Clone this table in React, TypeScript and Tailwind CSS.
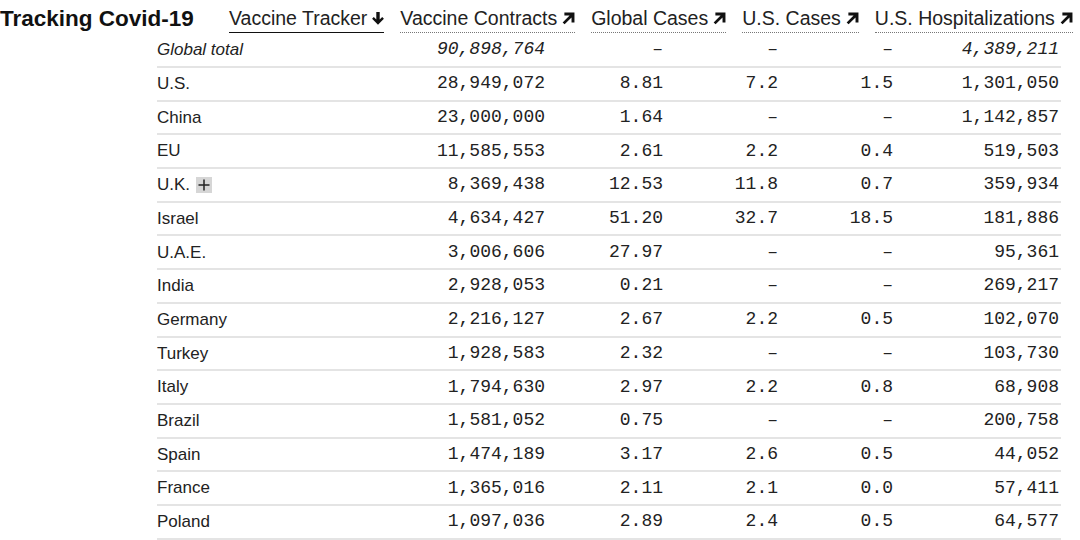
const sans = "font-['Liberation_Sans',Arial,sans-serif]"
const mono = "font-['Liberation_Mono','Courier_New',monospace]"

type Row = {
  name: string
  contracts: string
  global: string
  usCases: string
  usHosp: string
  hosp: string
  italic?: boolean
  plus?: boolean
}

const rows: Row[] = [
  { name: 'Global total', contracts: '90,898,764', global: '–', usCases: '–', usHosp: '–', hosp: '4,389,211', italic: true },
  { name: 'U.S.', contracts: '28,949,072', global: '8.81', usCases: '7.2', usHosp: '1.5', hosp: '1,301,050' },
  { name: 'China', contracts: '23,000,000', global: '1.64', usCases: '–', usHosp: '–', hosp: '1,142,857' },
  { name: 'EU', contracts: '11,585,553', global: '2.61', usCases: '2.2', usHosp: '0.4', hosp: '519,503' },
  { name: 'U.K.', contracts: '8,369,438', global: '12.53', usCases: '11.8', usHosp: '0.7', hosp: '359,934', plus: true },
  { name: 'Israel', contracts: '4,634,427', global: '51.20', usCases: '32.7', usHosp: '18.5', hosp: '181,886' },
  { name: 'U.A.E.', contracts: '3,006,606', global: '27.97', usCases: '–', usHosp: '–', hosp: '95,361' },
  { name: 'India', contracts: '2,928,053', global: '0.21', usCases: '–', usHosp: '–', hosp: '269,217' },
  { name: 'Germany', contracts: '2,216,127', global: '2.67', usCases: '2.2', usHosp: '0.5', hosp: '102,070' },
  { name: 'Turkey', contracts: '1,928,583', global: '2.32', usCases: '–', usHosp: '–', hosp: '103,730' },
  { name: 'Italy', contracts: '1,794,630', global: '2.97', usCases: '2.2', usHosp: '0.8', hosp: '68,908' },
  { name: 'Brazil', contracts: '1,581,052', global: '0.75', usCases: '–', usHosp: '–', hosp: '200,758' },
  { name: 'Spain', contracts: '1,474,189', global: '3.17', usCases: '2.6', usHosp: '0.5', hosp: '44,052' },
  { name: 'France', contracts: '1,365,016', global: '2.11', usCases: '2.1', usHosp: '0.0', hosp: '57,411' },
  { name: 'Poland', contracts: '1,097,036', global: '2.89', usCases: '2.4', usHosp: '0.5', hosp: '64,577' },
]

function ArrowDown() {
  return (
    <svg width="12" height="14" viewBox="0 0 12 14" className="ml-[5px]">
      <path d="M4.3 0h3.4v7.6l2.5-2.5 1.7 1.7L6 12.8 .1 6.8l1.7-1.7 2.5 2.5z" fill="#111" />
    </svg>
  )
}

function ArrowUpRight() {
  return (
    <svg width="13" height="13" viewBox="0 0 12 12" className="ml-[5px]">
      <path d="M2.2 0.5H11.5v9.3H8.8V5L2.4 11.4 0.6 9.6 7 3.2H2.2z" fill="#111" />
    </svg>
  )
}

function HeaderTab({ label, active }: { label: string; active?: boolean }) {
  return (
    <div
      className={
        active
          ? 'flex items-center pt-[4px] h-[32px] border-b-[1.5px] border-[#111] text-[19.5px] text-[#222]'
          : 'flex items-center pt-[4px] h-[32px] border-b border-dotted border-[#777] text-[19.5px] text-[#222]'
      }
    >
      <span>{label}</span>
      {active ? <ArrowDown /> : <ArrowUpRight />}
    </div>
  )
}

function Cell({ children, italic }: { children: React.ReactNode; italic?: boolean }) {
  return (
    <div className={`${mono} text-[18px] text-right text-[#222] ${italic ? 'italic' : ''}`}>
      {children}
    </div>
  )
}

export default function App() {
  return (
    <div className={`${sans} w-[1080px] h-[540px] bg-white overflow-hidden`}>
      <div className="flex items-end h-[33px]">
        <div className="w-[229px] h-[32px] pt-[4px] flex items-center text-[22.5px] font-bold text-[#111]">
          Tracking Covid-19
        </div>
        <div className="flex gap-[16px]">
          <HeaderTab label="Vaccine Tracker" active />
          <HeaderTab label="Vaccine Contracts" />
          <HeaderTab label="Global Cases" />
          <HeaderTab label="U.S. Cases" />
          <HeaderTab label="U.S. Hospitalizations" />
        </div>
      </div>
      <div className="ml-[157px] w-[904px]">
        {rows.map((r) => (
          <div
            key={r.name}
            className={`grid grid-cols-[250px_138px_118px_115px_115px_166px] items-center pr-[2px] border-b-2 border-[#e4e4e4] ${
              r.italic ? 'h-[35px]' : 'h-[33.7px]'
            }`}
          >
            <div className={`flex items-center text-[17px] text-[#222] ${r.italic ? 'italic' : ''}`}>
              {r.name}
              {r.plus && (
                <span className="ml-[6px] w-[16px] h-[16px] bg-[#d6d6d6] flex items-center justify-center">
                  <svg width="12" height="12" viewBox="0 0 12 12">
                    <path d="M5.25 0.5h1.5v4.75h4.75v1.5H6.75v4.75h-1.5V6.75H0.5v-1.5h4.75z" fill="#222" />
                  </svg>
                </span>
              )}
            </div>
            <Cell italic={r.italic}>{r.contracts}</Cell>
            <Cell>{r.global}</Cell>
            <Cell>{r.usCases}</Cell>
            <Cell>{r.usHosp}</Cell>
            <Cell italic={r.italic}>{r.hosp}</Cell>
          </div>
        ))}
      </div>
    </div>
  )
}
